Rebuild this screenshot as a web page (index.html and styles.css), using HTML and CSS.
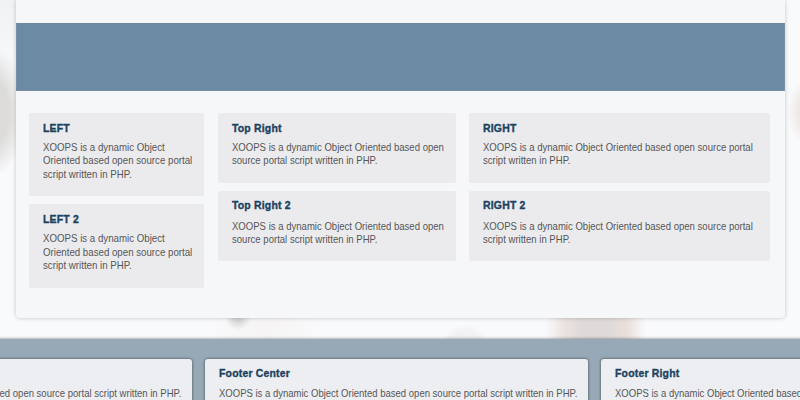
FILE: index.html
```
<!DOCTYPE html>
<html lang="en">
<head>
<meta charset="utf-8">
<title>XOOPS</title>
<link rel="stylesheet" href="styles.css">
</head>
<body>
<main class="page">
  <div class="banner"></div>
  <div class="columns">
    <div class="column">
      <section class="block tall"><h2>LEFT</h2><p>XOOPS is a dynamic Object<br>Oriented based open source portal<br>script written in PHP.</p></section>
      <section class="block tall"><h2>LEFT 2</h2><p>XOOPS is a dynamic Object<br>Oriented based open source portal<br>script written in PHP.</p></section>
    </div>
    <div class="column">
      <section class="block"><h2>Top Right</h2><p>XOOPS is a dynamic Object Oriented based open<br>source portal script written in PHP.</p></section>
      <section class="block lower"><h2>Top Right 2</h2><p>XOOPS is a dynamic Object Oriented based open<br>source portal script written in PHP.</p></section>
    </div>
    <div class="column">
      <section class="block"><h2>RIGHT</h2><p>XOOPS is a dynamic Object Oriented based open source portal<br>script written in PHP.</p></section>
      <section class="block lower"><h2>RIGHT 2</h2><p>XOOPS is a dynamic Object Oriented based open source portal<br>script written in PHP.</p></section>
    </div>
  </div>
</main>
<footer class="footer">
  <section class="footer-block"><p class="untitled">XOOPS is a dynamic Object Oriented based open source portal script written in PHP.</p></section>
  <section class="footer-block"><h2>Footer Center</h2><p>XOOPS is a dynamic Object Oriented based open source portal script written in PHP.</p></section>
  <section class="footer-block"><h2>Footer Right</h2><p>XOOPS is a dynamic Object Oriented based open source portal script written in PHP.</p></section>
</footer>
</body>
</html>
```
FILE: styles.css
```
* { box-sizing: border-box; }
body {
  margin: 0;
  height: 400px;
  overflow: hidden;
  font-family: "Liberation Sans", Arial, sans-serif;
  background:
    radial-gradient(ellipse 34px 66px at -8px 112px, #dddcda 50%, transparent 100%),
    radial-gradient(ellipse 22px 34px at 809px 112px, #e9dfdb 20%, transparent 100%),
    radial-gradient(circle 13px at 238px 317px, #d5d5d6 30%, transparent 100%),
    radial-gradient(ellipse 60px 30px at 265px 325px, #f6f3f4 0%, transparent 100%),
    radial-gradient(circle 24px at 465px 348px, #f2f2f4 70%, transparent 100%),
    linear-gradient(90deg, transparent 545px, #eae2df 565px, #dedad9 582px, #dedad9 610px, #eae0dc 628px, transparent 646px) 0 318px / 100% 21px no-repeat,
    linear-gradient(#eff1f3, #f9fafc) 0 0 / 16px 75px no-repeat,
    #f9fafc;
}
.page {
  width: 769px;
  height: 318px;
  margin-left: 15.7px;
  padding-top: 23px;
  background: #f6f7f9;
  border-radius: 0 0 4px 4px;
  box-shadow: 0 0 4px rgba(0, 0, 0, .22);
}
.banner {
  height: 68px;
  background: #6b8aa3;
  border: 1px solid #7890a6;
  border-top-color: #7089a0;
}
.columns {
  display: grid;
  grid-template-columns: 175.5px 238px 301px;
  column-gap: 13.5px;
  padding: 22px 13.3px 0;
}
.block {
  height: 70px;
  margin-bottom: 7.5px;
  padding: 7px 14px 0;
  background: #ebebed;
  border-radius: 2px;
}
.tall { height: 83.3px; margin-bottom: 8px; }
h2, p {
  width: max-content;
  white-space: nowrap;
  transform-origin: 0 50%;
}
h2 {
  margin: 0 0 5px;
  font-size: 11px;
  line-height: 16px;
  color: #1c4260;
  letter-spacing: .2px;
  -webkit-text-stroke: .35px #1c4260;
  transform: scaleX(.95);
}
.lower h2 { margin: -.6px 0 6.6px; }
p {
  margin: 0;
  font-size: 10.7px;
  line-height: 13.3px;
  color: #565657;
  transform: scaleX(.894);
}
.tall p { transform: scaleX(.907); }
.footer {
  display: grid;
  grid-template-columns: repeat(3, 383px);
  column-gap: 13px;
  width: 1175px;
  height: 61px;
  margin: 21px 0 0 -191px;
  padding-top: 20px;
  background: #97a9b6;
  box-shadow: 0 0 3px rgba(0, 0, 0, .5);
}
.footer-block {
  height: 80px;
  padding: 6px 14px 0;
  background: #edeef2;
  border-radius: 3px;
  box-shadow: 0 0 3px rgba(0, 0, 0, .6);
}
.footer-block h2 { margin-bottom: 5.5px; }
.footer-block p { transform: scaleX(.89); }
.footer-block .untitled { margin-top: 21.5px; }
```
